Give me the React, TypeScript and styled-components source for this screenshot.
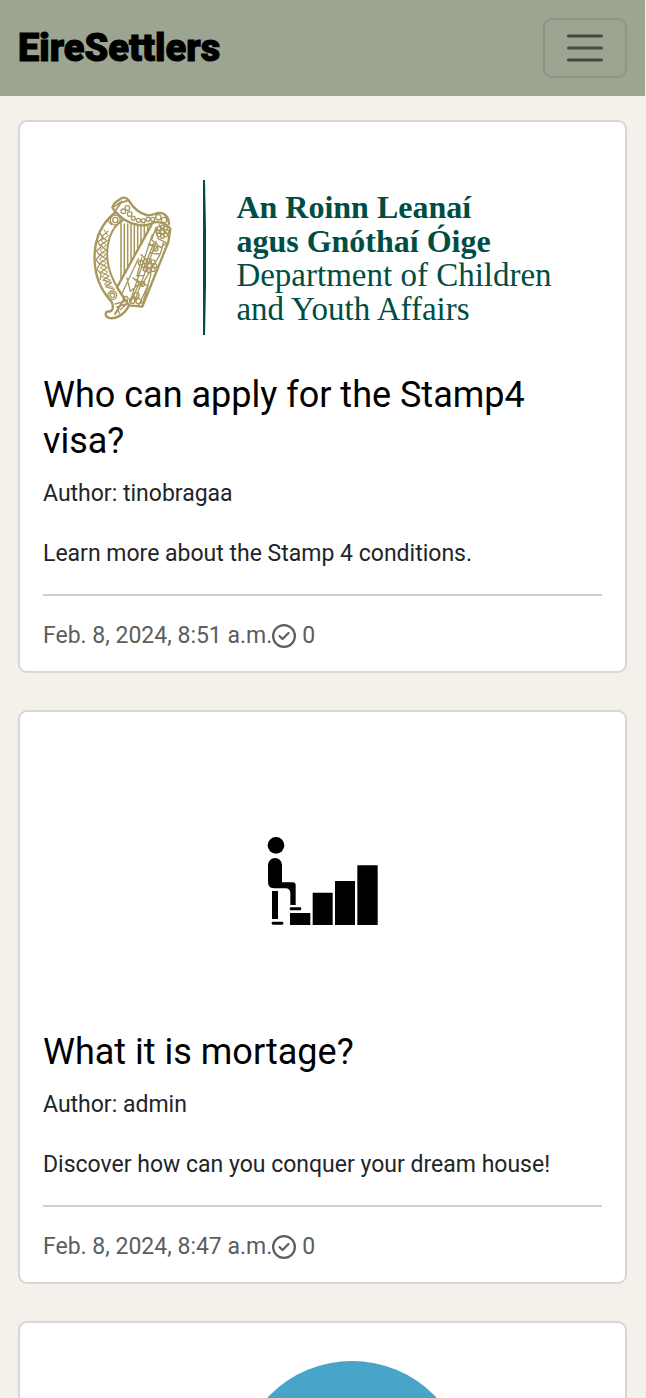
import React from "react";
import styled, { createGlobalStyle } from "styled-components";
import { FaRegCircleCheck } from "react-icons/fa6";

const GlobalStyle = createGlobalStyle`
  *, *::before, *::after { box-sizing: border-box; }
  body {
    margin: 0;
    background: #f4f1ea;
    color: #212529;
    font-family: Roboto, "Liberation Sans", sans-serif;
    font-size: 23px;
    line-height: 36px;
  }
`;

const Page = styled.div`
  padding-right: 1px;
`;

const Navbar = styled.header`
  display: flex;
  align-items: center;
  justify-content: space-between;
  height: 96px;
  padding: 0 18px;
  background: #9ca592;
`;

const Brand = styled.a`
  color: #000;
  font-size: 38px;
  font-weight: 900;
  line-height: 54px;
  text-decoration: none;
  -webkit-text-stroke: 1px #000;
`;

const Toggler = styled.button`
  display: flex;
  align-items: center;
  justify-content: center;
  width: 84px;
  height: 60px;
  padding: 0;
  border: 2px solid #8d9584;
  border-radius: 9px;
  background: transparent;
  cursor: pointer;
`;

const Feed = styled.main`
  display: flex;
  flex-direction: column;
  gap: 37px;
  padding: 24px 18px;
`;

const Card = styled.article`
  border: 2px solid #d8d7d5;
  border-radius: 9px;
  background: #fff;
`;

const Cover = styled.div<{ $height: number }>`
  display: flex;
  align-items: center;
  justify-content: center;
  height: ${(p) => p.$height}px;
  padding-top: 21px;
`;

const CardBody = styled.div`
  padding: 0 23px 17px;
`;

const Title = styled.h2`
  margin: 0 0 12px;
  font-size: 36px;
  font-weight: 400;
  line-height: 46px;
`;

const TitleLink = styled.a`
  color: #000;
  text-decoration: none;
`;

const Author = styled.p`
  margin: 0 0 24px;
`;

const Excerpt = styled.p`
  margin: 0 0 22px;
`;

const Rule = styled.hr`
  height: 2px;
  margin: 0 0 22px;
  border: 0;
  background: #cfcfd0;
`;

const Meta = styled.div`
  display: flex;
  align-items: center;
  color: #5b5d60;
`;

const Votes = styled.span`
  display: flex;
  align-items: center;
  gap: 6px;
`;

const Logo = styled.div`
  display: flex;
  align-items: center;
  gap: 30px;
  color: #004d44;
`;

const LogoText = styled.div`
  font-family: "Liberation Serif", serif;
  font-size: 33px;
  line-height: 34px;
  white-space: nowrap;
`;

const LogoLine = styled.div<{ $bold?: boolean }>`
  font-size: ${(p) => (p.$bold ? 32 : 33)}px;
  font-weight: ${(p) => (p.$bold ? 700 : 400)};
`;

const strings = [124, 134, 144, 154, 164, 174, 184, 194, 204];

function Flower({ x, y, r }: { x: number; y: number; r: number }) {
  const petals = Array.from({ length: 8 }, (_, i) => (i * Math.PI) / 4);
  return (
    <g strokeWidth="4">
      {petals.map((a) => (
        <circle key={a} cx={x + Math.cos(a) * r * 0.75} cy={y + Math.sin(a) * r * 0.75} r={r * 0.29} />
      ))}
      <circle cx={x} cy={y} r={r * 0.3} />
    </g>
  );
}

function Harp() {
  return (
    <svg width="79" height="124" viewBox="40 84 237 372" fill="none" stroke="#a8975c" strokeWidth="7" strokeLinecap="round" strokeLinejoin="round" aria-hidden="true">
      <path d="M106 130L98 118Q101 107 112 100L123 92Q136 84 147 97C160 118 180 136 200 141C215 145 222 137 236 135C255 133 267 147 268 168" />
      <path d="M106 130L132 154C160 172 195 178 216 166C235 156 262 168 272 182L266 222L188 416L148 412L112 358L216 170" />
      <path d="M104 116L126 100M106 130L124 104L147 97" strokeWidth="5" />
      <path d="M108 132C60 170 42 220 45 280C48 340 72 374 96 402C104 420 97 433 87 430C76 430 75 445 86 449C105 456 136 440 148 412" />
      <path d="M132 154C90 180 78 230 84 280C88 315 105 350 134 392L106 438" strokeWidth="6" />
      <g strokeWidth="4.5">
        {strings.map((x) => (
          <path key={x} d={`M${x} ${x < 134 ? 160 : 168}V${346 - (x - 118) * 1.8}`} />
        ))}
      </g>
      <g strokeWidth="4">
        <circle cx="107" cy="156" r="15" />
        <circle cx="107" cy="156" r="8" />
        <circle cx="98" cy="382" r="13" />
        <circle cx="98" cy="382" r="7" />
        <circle cx="143" cy="120" r="7" />
        <circle cx="131" cy="130" r="7" />
        <circle cx="150" cy="138" r="7" />
        <circle cx="161" cy="151" r="6" />
        <circle cx="176" cy="157" r="6" />
        <circle cx="191" cy="158" r="6" />
        <circle cx="205" cy="154" r="6" />
        <circle cx="219" cy="154" r="6" />
        <circle cx="236" cy="148" r="8" />
        <circle cx="253" cy="156" r="8" />
        <path d="M82 155L95 170M238 170L262 196" />
        <path d="M85 190L66 206L82 218L62 232L80 246L60 260L80 273L61 286L82 299L64 312L88 324L70 336L95 344L78 356L104 364" />
        <path d="M72 184L86 204L64 218L80 232L60 246L79 260L59 273L80 286L61 299L84 312L66 326L92 336L74 348L100 358" strokeWidth="3" />
        <path d="M62 196L70 210L54 222L64 236L50 248L60 262L49 276L60 288L52 304L64 318L62 334" />
        <path d="M229 178L216 215L242 238L262 225L235 212L229 178M218 200L150 404M230 220L164 402M252 222L242 258L214 256L234 236L206 228M242 258L186 352L160 330L205 354L188 408M188 262L172 324L192 322M222 226L190 306M176 272L128 374M184 260L202 275M142 330L152 370L178 348L154 400M214 318L204 354L178 410" />
        <circle cx="228" cy="242" r="7" />
        <circle cx="183" cy="284" r="7" />
        <circle cx="188" cy="348" r="7" />
        <circle cx="170" cy="382" r="8" />
        <circle cx="158" cy="398" r="8" />
        <circle cx="177" cy="400" r="8" />
        <circle cx="138" cy="392" r="7" />
        <path d="M143 406L114 416M143 406L122 425M136 400L106 408M112 416L119 436" />
      </g>
      <Flower x={248} y={191} r={19} />
      <Flower x={209} y={293} r={21} />
    </svg>
  );
}

function DepartmentLogo() {
  return (
    <Logo>
      <Harp />
      <svg width="4" height="155" viewBox="0 0 4 155" aria-hidden="true">
        <path d="M1 0H3L4 50V105L3 155H1V105L1 50Z" fill="#004d44" />
      </svg>
      <LogoText>
        <LogoLine $bold>An Roinn Leanaí</LogoLine>
        <LogoLine $bold>agus Gnóthaí Óige</LogoLine>
        <LogoLine>Department of Children</LogoLine>
        <LogoLine>and Youth Affairs</LogoLine>
      </LogoText>
    </Logo>
  );
}

function StepsPicture() {
  return (
    <svg width="112" height="90" viewBox="51 50 336 270" role="img" aria-label="Person sitting before rising steps">
      <circle cx="78" cy="78" r="25" />
      <path d="M54 137A21 21 0 0 1 96 137V189H128Q137 189 137 198V257H121V222Q121 207 106 207H74Q54 207 54 187Z" />
      <path d="M66 215H84V299H66Z" />
      <rect x="65" y="307" width="35" height="9" rx="4" />
      <rect x="119" y="264" width="35" height="9" rx="4" />
      <path d="M120 281H181V317H120ZM188 220H248V317H188ZM255 185H315V317H255ZM322 138H383V317H322Z" />
    </svg>
  );
}

const DiscCover = styled(Cover)`
  align-items: flex-start;
  padding: 38px 0 0 58px;
`;

function DiscPicture() {
  return (
    <svg width="232" height="232" viewBox="0 0 232 232" aria-hidden="true">
      <circle cx="116" cy="116" r="116" fill="#48a4c8" />
    </svg>
  );
}

interface PostProps {
  title: string;
  author: string;
  excerpt: string;
  date: string;
}

function PostBody({ title, author, excerpt, date }: PostProps) {
  return (
    <CardBody>
      <Title>
        <TitleLink href="#">{title}</TitleLink>
      </Title>
      <Author>Author: {author}</Author>
      <Excerpt>{excerpt}</Excerpt>
      <Rule />
      <Meta>
        <span>{date}</span>
        <Votes>
          <FaRegCircleCheck size={24} aria-hidden="true" />
          <span>0</span>
        </Votes>
      </Meta>
    </CardBody>
  );
}

const Viewport = styled.div`
  height: 100vh;
  overflow: hidden;
`;

export default function App() {
  return (
    <Viewport>
      <GlobalStyle />
      <Page>
        <Navbar>
          <Brand href="#">EireSettlers</Brand>
          <Toggler type="button" aria-label="Toggle navigation">
            <svg width="36" height="28" viewBox="0 0 36 28" fill="none" stroke="#454b43" strokeWidth="3" strokeLinecap="round" aria-hidden="true">
              <path d="M1.5 2H34.5M1.5 14H34.5M1.5 26H34.5" />
            </svg>
          </Toggler>
        </Navbar>
        <Feed>
          <Card>
            <Cover $height={250}>
              <DepartmentLogo />
            </Cover>
            <PostBody
              title="Who can apply for the Stamp4 visa?"
              author="tinobragaa"
              excerpt="Learn more about the Stamp 4 conditions."
              date="Feb. 8, 2024, 8:51 a.m."
            />
          </Card>
          <Card>
            <Cover $height={317}>
              <StepsPicture />
            </Cover>
            <PostBody
              title="What it is mortage?"
              author="admin"
              excerpt="Discover how can you conquer your dream house!"
              date="Feb. 8, 2024, 8:47 a.m."
            />
          </Card>
          <Card>
            <DiscCover $height={317}>
              <DiscPicture />
            </DiscCover>
          </Card>
        </Feed>
      </Page>
    </Viewport>
  );
}
